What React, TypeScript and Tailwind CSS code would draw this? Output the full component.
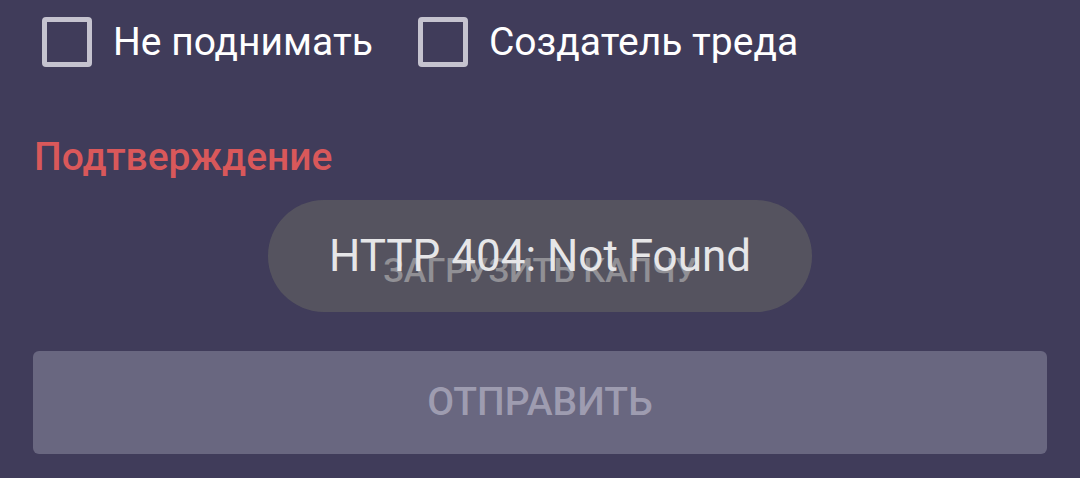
import { useState } from 'react';

function Box({ checked, onToggle, label }: { checked: boolean; onToggle: () => void; label: string }) {
  return (
    <button onClick={onToggle} className="flex items-center">
      <span className="w-[50px] h-[50px] border-[5px] border-[#c5c3cf] rounded-[4px] shrink-0" />
      <span className="ml-[21px] text-[39px] leading-[50px] text-white">{label}</span>
    </button>
  );
}

export default function App() {
  const [noBump, setNoBump] = useState(false);
  const [op, setOp] = useState(false);

  return (
    <div
      className="w-full h-[478px] bg-[#403c5a] overflow-hidden"
      style={{ fontFamily: 'Roboto, "Noto Sans", sans-serif' }}
    >
      {/* Options */}
      <div className="flex items-center pt-[17px] pl-[42px] gap-[45px]">
        <Box checked={noBump} onToggle={() => setNoBump(!noBump)} label="Не поднимать" />
        <Box checked={op} onToggle={() => setOp(!op)} label="Создатель треда" />
      </div>

      {/* Captcha */}
      <div className="pl-[34px] mt-[67px] text-[39px] leading-[46px] font-medium text-[#d9585a]">
        Подтверждение
      </div>

      <div className="relative h-[112px] mt-[20px] flex items-center justify-center">
        <span className="text-[34px] font-medium text-[#dcdae6] pt-[28px]">ЗАГРУЗИТЬ КАПЧУ</span>

        {/* Toast */}
        <div className="absolute left-[268px] top-0 w-[544px] h-[112px] rounded-full bg-[rgba(98,98,98,0.62)] flex items-center justify-center">
          <span className="text-[44px] leading-[52px] text-[#e6e6e8]">HTTP 404: Not Found</span>
        </div>
      </div>

      <div className="px-[33px] mt-[39px]">
        <button className="w-full h-[103px] rounded-[6px] bg-[#696780] text-[39px] font-medium text-[#9e9cb0]">
          ОТПРАВИТЬ
        </button>
      </div>
    </div>
  );
}
